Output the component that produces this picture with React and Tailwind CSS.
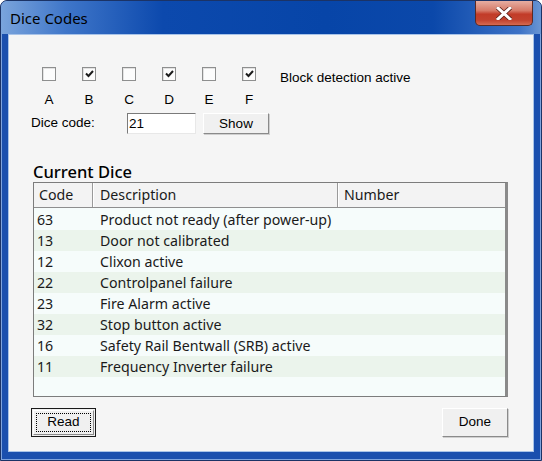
import React from 'react'

const ROWS = [
  ['63', 'Product not ready (after power-up)'],
  ['13', 'Door not calibrated'],
  ['12', 'Clixon active'],
  ['22', 'Controlpanel failure'],
  ['23', 'Fire Alarm active'],
  ['32', 'Stop button active'],
  ['16', 'Safety Rail Bentwall (SRB) active'],
  ['11', 'Frequency Inverter failure'],
]

const CHECKS = [
  ['A', false],
  ['B', true],
  ['C', false],
  ['D', true],
  ['E', false],
  ['F', true],
]

const classic = { fontFamily: '"Liberation Sans", Arial, sans-serif' }
const segoe = { fontFamily: '"Noto Sans", "Open Sans", sans-serif' }

function Check({ checked }) {
  return (
    <div className="w-[14px] h-[14px] bg-[#fcfcfc] border border-[#8e8f8f] shadow-[inset_1px_1px_0_#e2e2e2] flex items-center justify-center">
      {checked && (
        <svg width="9" height="8" viewBox="0 0 9 8">
          <path d="M1 3.5 L3.5 6 L8 1" fill="none" stroke="#1c1c1c" strokeWidth="2" />
        </svg>
      )}
    </div>
  )
}

export default function App() {
  return (
    <div className="w-[542px] h-[461px] bg-[#1a4fae] border border-[#1b3366] rounded-t-[7px] flex flex-col overflow-hidden shadow-[inset_0_0_0_1px_#7ea3dd]">
      {/* title bar */}
      <div className="h-[33px] flex items-start bg-[linear-gradient(to_right,#7aa4dc_0%,#3f76c9_12%,#0c49ad_30%,#0745a8_60%,#0b48aa_80%,#3d72c6_96%,#6a96d4_100%)] pl-[9px] pr-[8px]">
        <span className="mt-[7px] text-[15px] leading-[20px] text-black" style={segoe}>Dice Codes</span>
        <div className="ml-auto w-[58px] h-[25px] rounded-b-[5px] border border-t-0 border-[#5a2a24] bg-[linear-gradient(to_bottom,#e6aea2_0%,#d67a68_40%,#c23b28_55%,#c3432f_80%,#d56a52_100%)] flex items-center justify-center">
          <svg width="16" height="13" viewBox="0 0 16 13">
            <path d="M2 1 L14 12 M14 1 L2 12" stroke="#5a1f18" strokeWidth="4.5" strokeLinecap="square" />
            <path d="M2 1 L14 12 M14 1 L2 12" stroke="#ffffff" strokeWidth="3" strokeLinecap="square" />
          </svg>
        </div>
      </div>

      {/* client area */}
      <div className="mx-[7px] mb-[8px] flex-1 bg-[#f5f5f5] border border-[#a8c3e8] flex flex-col pt-[32px] text-[13.5px] text-black" style={classic}>
        <div className="flex ml-[20px]">
          <div className="grid grid-cols-6 w-[240px]">
            {CHECKS.map(([label, checked]) => (
              <div key={label} className="flex flex-col items-center">
                <Check checked={checked} />
                <span className="mt-[11px] leading-[15px]">{label}</span>
              </div>
            ))}
          </div>
          <span className="ml-[11px] mt-[3px] leading-[15px]">Block detection active</span>
        </div>

        <div className="flex items-center ml-[22px] mt-[6px] h-[21px]">
          <span className="w-[96px]">Dice code:</span>
          <div className="w-[69px] h-[21px] bg-white border border-t-[#7a7a7a] border-l-[#7a7a7a] border-r-[#e8e8e8] border-b-[#e8e8e8] pl-[1px] leading-[19px]">21</div>
          <button className="ml-[7px] w-[66px] h-[21px] bg-[#f0f0f0] border border-t-white border-l-white border-r-[#8a8a8a] border-b-[#8a8a8a] shadow-[1px_1px_0_#cfcfcf] leading-[19px]">Show</button>
        </div>

        <div className="ml-[24px] mt-[28px] text-[16.5px] leading-[20px] font-medium" style={segoe}>Current Dice</div>

        <div className="ml-[24px] w-[475px] h-[215px] border border-[#7c7c7c] border-r-[3px] border-r-[#8a8a8a] bg-[#f6fcfb] flex flex-col text-[14.2px] text-[#1a1a1a]" style={segoe}>
          <div className="flex h-[25px] bg-[#f3f3f3] border-b border-[#8e8e8e] shrink-0">
            <div className="w-[59px] pl-[5px] leading-[24px] border-r border-[#9a9a9a] shadow-[1px_0_0_#ffffff]">Code</div>
            <div className="w-[245px] pl-[7px] leading-[24px] border-r border-[#9a9a9a] shadow-[1px_0_0_#ffffff]">Description</div>
            <div className="flex-1 pl-[6px] leading-[24px]">Number</div>
          </div>
          <div className="mt-[1px]">
            {ROWS.map(([code, desc], i) => (
              <div key={code} className={`flex h-[21px] leading-[21px] ${i % 2 ? 'bg-[#ebf4ec]' : 'bg-[#f6fcfb]'}`}>
                <span className="w-[59px] pl-[3px]">{code}</span>
                <span className="pl-[7px]">{desc}</span>
              </div>
            ))}
          </div>
        </div>

        <div className="flex justify-between ml-[22px] mr-[25px] mt-[11px]">
          <button className="w-[65px] h-[29px] bg-[#f0f0f0] border border-[#1a1a1a] p-[1px]">
            <div className="h-full border border-t-white border-l-white border-r-[#8a8a8a] border-b-[#8a8a8a] p-[2px]">
              <div className="h-full border border-dotted border-black flex items-center justify-center">Read</div>
            </div>
          </button>
          <button className="w-[66px] h-[29px] bg-[#f0f0f0] border border-t-white border-l-white border-r-[#8a8a8a] border-b-[#8a8a8a] shadow-[1px_1px_0_#cfcfcf]">Done</button>
        </div>
      </div>
    </div>
  )
}
